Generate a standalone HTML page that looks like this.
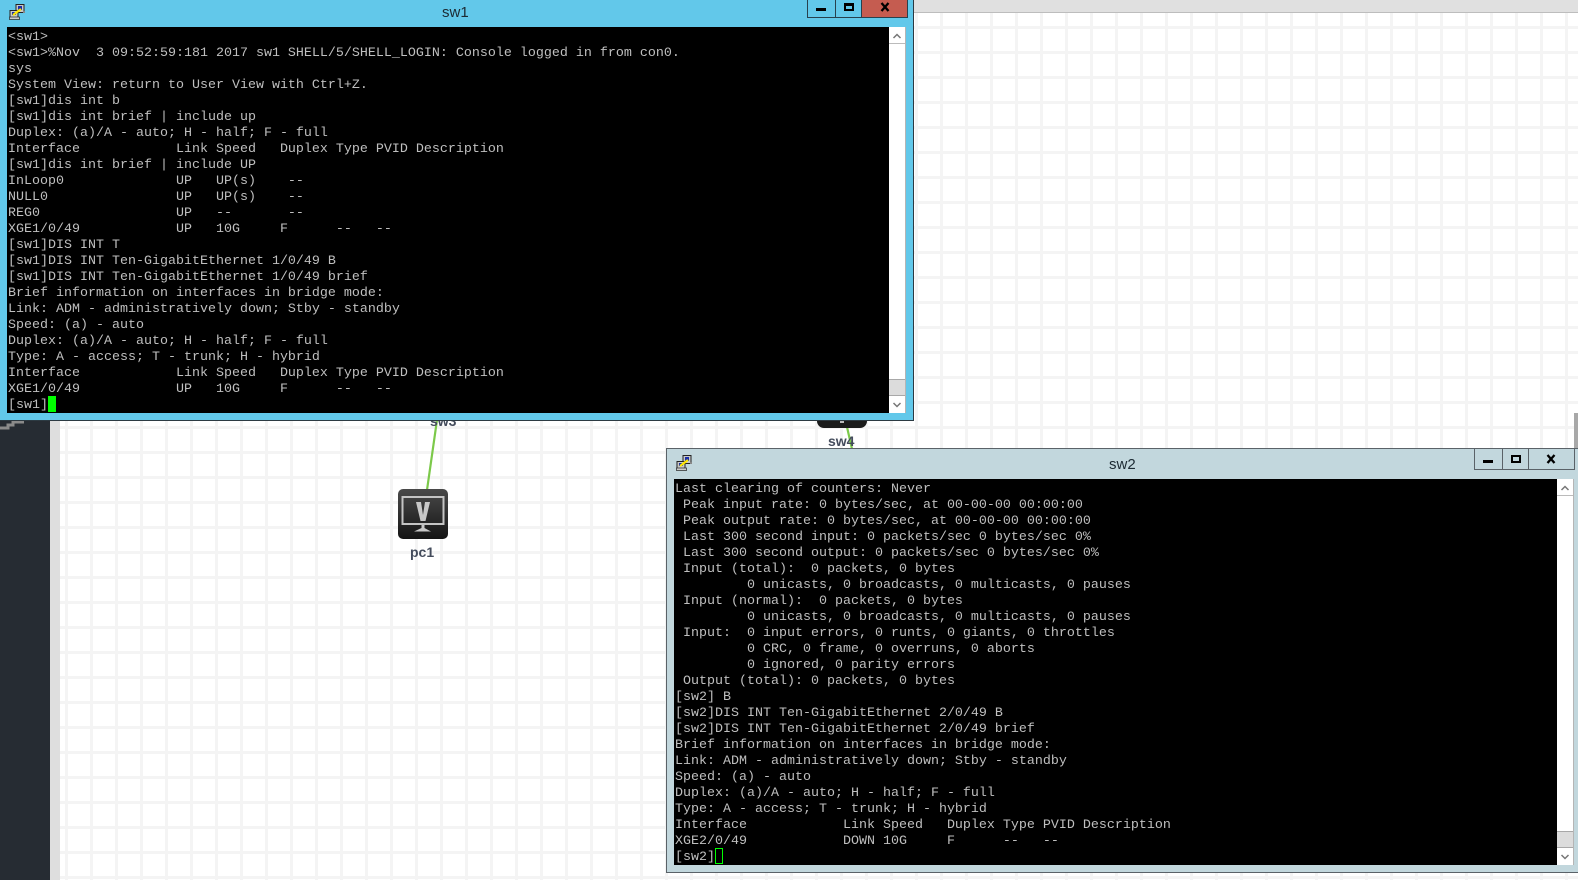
<!DOCTYPE html>
<html>
<head>
<meta charset="utf-8">
<style>
html,body{margin:0;padding:0;width:1578px;height:880px;overflow:hidden;background:#fff;}
.a{position:absolute;}
#grid{left:60px;top:0;width:1518px;height:880px;background-color:#fff;
background-image:linear-gradient(to right,#f4f4f4 0,#f4f4f4 3px,transparent 3px),linear-gradient(to bottom,#f4f4f4 0,#f4f4f4 3px,transparent 3px);
background-size:25px 25px;background-position:-45px 1px;}
pre{position:absolute;margin:0;font:13.33px/16px "Liberation Mono",monospace;color:#bfbfbf;white-space:pre;}
.title{position:absolute;font:15px "Liberation Sans",sans-serif;color:#1c2a33;}
.lbl{position:absolute;font:bold 14px "Liberation Sans",sans-serif;color:#444c5c;}
.btn{position:absolute;box-sizing:border-box;}
</style>
</head>
<body>
<div class="a" id="grid"></div>
<div class="a" style="left:914px;top:0;width:664px;height:12px;background:#e0e0e0;border-bottom:1px solid #bdbdbd"></div>
<div class="a" style="left:0;top:420px;width:50px;height:460px;background:#262c33"></div>
<div class="a" style="left:50px;top:420px;width:10px;height:460px;background:#dedede"></div>
<svg class="a" style="left:0;top:420px" width="26" height="10"><path d="M0 8H8V5H13V2H24" fill="none" stroke="#8a8a8a" stroke-width="3"/></svg>
<div class="a" style="left:1574px;top:413px;width:4px;height:35px;background:#a8a8a8"></div>

<svg class="a" style="left:380px;top:405px" width="100" height="90"><path d="M57 15L47 85" stroke="#7cc94a" stroke-width="2.2"/></svg>
<svg class="a" style="left:840px;top:425px" width="20" height="25"><path d="M7 2L12 24" stroke="#7cc94a" stroke-width="2.2"/></svg>
<div class="lbl" style="left:430px;top:413px">sw3</div>
<div class="a" style="left:817px;top:415px;width:50px;height:13px;background:#1b1b1b;border-radius:0 0 7px 7px"></div>
<div class="a" style="left:840px;top:421px;width:4px;height:2px;background:#bbb"></div>
<div class="lbl" style="left:828px;top:433px">sw4</div>

<svg class="a" style="left:398px;top:489px" width="50" height="50" viewBox="0 0 50 50">
<defs><linearGradient id="g" x1="0" y1="0" x2="0" y2="1"><stop offset="0" stop-color="#4a4a4a"/><stop offset="1" stop-color="#141414"/></linearGradient></defs>
<rect width="50" height="50" rx="5" fill="url(#g)"/>
<rect x="4.5" y="8" width="41" height="27" fill="none" stroke="#c4c4c4" stroke-width="2"/>
<path d="M18 13H23L25 26L27 13H32L27.5 32H22.500Z" fill="#c8c8c8"/>
<path d="M23.500 36H26.500V39L33 42.500H16L23.500 39Z" fill="#c8c8c8"/>
</svg>
<div class="lbl" style="left:410px;top:544px">pc1</div>

<!-- sw1 window -->
<div class="a" style="left:0;top:0;width:913px;height:420px;background:#62c8ea;border-right:1px solid #2c3a42;border-bottom:1px solid #2c3a42;box-sizing:content-box"></div>
<div class="a" style="left:7px;top:27px;width:882px;height:386px;background:#000"></div>
<div class="title" style="left:442px;top:4px">sw1</div>
<svg class="a" style="left:9px;top:4px" width="17" height="16" viewBox="0 0 17 16">
<rect x="7" y="0.500" width="8" height="8" fill="#c8c8c8" stroke="#222"/><rect x="9" y="2" width="4" height="4" fill="#1a2ea8"/><rect x="14" y="7" width="2" height="2" fill="#888"/>
<rect x="1" y="6.500" width="8" height="7" fill="#c8c8c8" stroke="#222"/><rect x="3" y="8" width="4" height="3" fill="#1a2ea8"/><rect x="0.500" y="13" width="10" height="2.500" fill="#ccc" stroke="#222" stroke-width=".7"/>
<path d="M4 11L12 5" stroke="#ffe800" stroke-width="2.200"/>
</svg>
<div class="btn" style="left:807px;top:0;width:29px;height:18px;border:1px solid #27414e;border-top:0"></div>
<div class="a" style="left:816px;top:8px;width:10px;height:3px;background:#000"></div>
<div class="btn" style="left:835px;top:0;width:27px;height:18px;border:1px solid #27414e;border-top:0"></div>
<div class="btn" style="left:844px;top:3px;width:10px;height:8px;border:2px solid #000;border-top-width:3px"></div>
<div class="btn" style="left:861px;top:0;width:47px;height:18px;background:#c55c50;border:1px solid #27414e;border-top:0"></div>
<svg class="a" style="left:880px;top:2px" width="10" height="10"><path d="M1.500 1L8.500 9M8.500 1L1.500 9" stroke="#000" stroke-width="2.300"/></svg>
<div class="a" style="left:889px;top:27px;width:16px;height:386px;background:#fff;border-right:1px solid #b5b5b5"></div>
<div class="a" style="left:889px;top:43px;width:16px;height:1px;background:#bbb"></div>
<svg class="a" style="left:889px;top:28px" width="16" height="16"><path d="M4.500 10L8 6.500L11.500 10" fill="none" stroke="#777" stroke-width="1.500"/></svg>
<div class="a" style="left:889px;top:379px;width:16px;height:17px;box-sizing:border-box;background:#dcdcdc;border-top:1px solid #a8a8a8;border-bottom:1px solid #a8a8a8"></div>
<svg class="a" style="left:889px;top:397px" width="16" height="16"><path d="M4.500 6L8 9.500L11.500 6" fill="none" stroke="#777" stroke-width="1.500"/></svg>
<pre style="left:8px;top:30px">&lt;sw1&gt;
&lt;sw1&gt;%Nov  3 09:52:59:181 2017 sw1 SHELL/5/SHELL_LOGIN: Console logged in from con0.
sys
System View: return to User View with Ctrl+Z.
[sw1]dis int b
[sw1]dis int brief | include up
Duplex: (a)/A - auto; H - half; F - full
Interface            Link Speed   Duplex Type PVID Description
[sw1]dis int brief | include UP
InLoop0              UP   UP(s)    --
NULL0                UP   UP(s)    --
REG0                 UP   --       --
XGE1/0/49            UP   10G     F      --   --
[sw1]DIS INT T
[sw1]DIS INT Ten-GigabitEthernet 1/0/49 B
[sw1]DIS INT Ten-GigabitEthernet 1/0/49 brief
Brief information on interfaces in bridge mode:
Link: ADM - administratively down; Stby - standby
Speed: (a) - auto
Duplex: (a)/A - auto; H - half; F - full
Type: A - access; T - trunk; H - hybrid
Interface            Link Speed   Duplex Type PVID Description
XGE1/0/49            UP   10G     F      --   --
[sw1]</pre>
<div class="a" style="left:48px;top:396px;width:8px;height:16px;background:#00ff00"></div>

<!-- sw2 window -->
<div class="a" style="left:666px;top:448px;width:912px;height:425px;box-sizing:border-box;background:#c2d7dd;border-left:1px solid #5a6268;border-top:1px solid #5a6268;border-bottom:1px solid #5a6268"></div>
<div class="a" style="left:674px;top:479px;width:883px;height:386px;background:#000"></div>
<div class="title" style="left:1109px;top:456px">sw2</div>
<svg class="a" style="left:676px;top:455px" width="17" height="16" viewBox="0 0 17 16">
<rect x="7" y="0.500" width="8" height="8" fill="#c8c8c8" stroke="#222"/><rect x="9" y="2" width="4" height="4" fill="#1a2ea8"/><rect x="14" y="7" width="2" height="2" fill="#888"/>
<rect x="1" y="6.500" width="8" height="7" fill="#c8c8c8" stroke="#222"/><rect x="3" y="8" width="4" height="3" fill="#1a2ea8"/><rect x="0.500" y="13" width="10" height="2.500" fill="#ccc" stroke="#222" stroke-width=".7"/>
<path d="M4 11L12 5" stroke="#ffe800" stroke-width="2.200"/>
</svg>
<div class="btn" style="left:1474px;top:448px;width:101px;height:22px;border:1px solid #5a6268"></div>
<div class="a" style="left:1502px;top:448px;width:1px;height:22px;background:#5a6268"></div>
<div class="a" style="left:1528px;top:448px;width:1px;height:22px;background:#5a6268"></div>
<div class="a" style="left:1483px;top:460px;width:10px;height:3px;background:#000"></div>
<div class="btn" style="left:1511px;top:455px;width:10px;height:8px;border:2px solid #000;border-top-width:2px"></div>
<svg class="a" style="left:1546px;top:454px" width="10" height="10"><path d="M1.500 1L8.500 9M8.500 1L1.500 9" stroke="#000" stroke-width="2.300"/></svg>
<div class="a" style="left:1557px;top:479px;width:16px;height:386px;background:#fff;border-right:1px solid #b5b5b5"></div>
<div class="a" style="left:1557px;top:495px;width:16px;height:1px;background:#bbb"></div>
<svg class="a" style="left:1557px;top:480px" width="16" height="16"><path d="M4.500 10L8 6.500L11.500 10" fill="none" stroke="#777" stroke-width="1.500"/></svg>
<div class="a" style="left:1557px;top:831px;width:16px;height:17px;box-sizing:border-box;background:#dcdcdc;border-top:1px solid #a8a8a8;border-bottom:1px solid #a8a8a8"></div>
<svg class="a" style="left:1557px;top:849px" width="16" height="16"><path d="M4.500 6L8 9.500L11.500 6" fill="none" stroke="#777" stroke-width="1.500"/></svg>
<pre style="left:675px;top:482px">Last clearing of counters: Never
 Peak input rate: 0 bytes/sec, at 00-00-00 00:00:00
 Peak output rate: 0 bytes/sec, at 00-00-00 00:00:00
 Last 300 second input: 0 packets/sec 0 bytes/sec 0%
 Last 300 second output: 0 packets/sec 0 bytes/sec 0%
 Input (total):  0 packets, 0 bytes
         0 unicasts, 0 broadcasts, 0 multicasts, 0 pauses
 Input (normal):  0 packets, 0 bytes
         0 unicasts, 0 broadcasts, 0 multicasts, 0 pauses
 Input:  0 input errors, 0 runts, 0 giants, 0 throttles
         0 CRC, 0 frame, 0 overruns, 0 aborts
         0 ignored, 0 parity errors
 Output (total): 0 packets, 0 bytes
[sw2] B
[sw2]DIS INT Ten-GigabitEthernet 2/0/49 B
[sw2]DIS INT Ten-GigabitEthernet 2/0/49 brief
Brief information on interfaces in bridge mode:
Link: ADM - administratively down; Stby - standby
Speed: (a) - auto
Duplex: (a)/A - auto; H - half; F - full
Type: A - access; T - trunk; H - hybrid
Interface            Link Speed   Duplex Type PVID Description
XGE2/0/49            DOWN 10G     F      --   --
[sw2]</pre>
<div class="a" style="left:715px;top:848px;width:8px;height:16px;box-sizing:border-box;border:1px solid #00ff00"></div>
</body>
</html>
